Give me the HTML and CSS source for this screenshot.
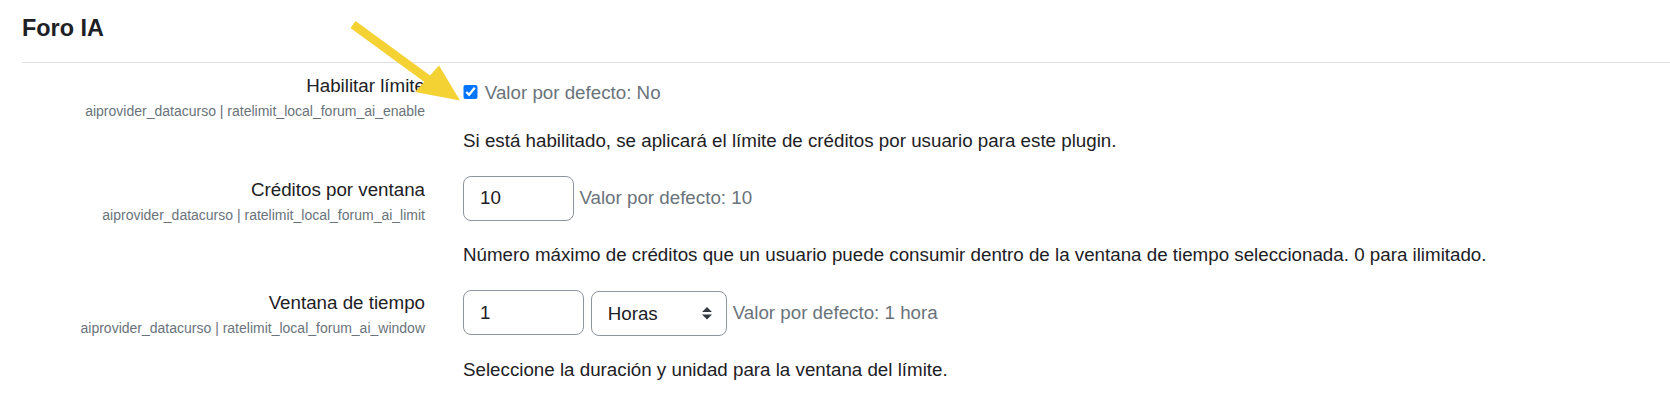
FILE: index.html
```html
<!DOCTYPE html>
<html lang="es">
<head>
<meta charset="utf-8">
<title>Foro IA</title>
<link rel="stylesheet" href="styles.css">
</head>
<body>
<div class="page">
  <h3 class="section-title">Foro IA</h3>
  <hr class="divider">

  <div class="form-item">
    <div class="form-label">
      <label class="label-text" for="enable">Habilitar límite</label>
      <span class="shortname">aiprovider_datacurso | ratelimit_local_forum_ai_enable</span>
    </div>
    <div class="form-setting">
      <div class="control-line checkbox-line">
        <input class="checkbox" type="checkbox" id="enable" checked>
        <span class="defaultinfo checkbox-default">Valor por defecto: No</span>
      </div>
      <p class="description">Si está habilitado, se aplicará el límite de créditos por usuario para este plugin.</p>
    </div>
  </div>

  <div class="form-item">
    <div class="form-label">
      <label class="label-text" for="limit">Créditos por ventana</label>
      <span class="shortname">aiprovider_datacurso | ratelimit_local_forum_ai_limit</span>
    </div>
    <div class="form-setting">
      <div class="control-line">
        <input class="text-input input-limit" type="text" id="limit" value="10">
        <span class="defaultinfo">Valor por defecto: 10</span>
      </div>
      <p class="description">Número máximo de créditos que un usuario puede consumir dentro de la ventana de tiempo seleccionada. 0 para ilimitado.</p>
    </div>
  </div>

  <div class="form-item">
    <div class="form-label">
      <label class="label-text" for="window">Ventana de tiempo</label>
      <span class="shortname">aiprovider_datacurso | ratelimit_local_forum_ai_window</span>
    </div>
    <div class="form-setting">
      <div class="control-line">
        <input class="text-input input-window" type="text" id="window" value="1">
        <span class="select-wrap">
          <select class="select">
            <option>Horas</option>
          </select>
          <svg class="select-arrow" viewBox="0 0 4 5" width="10" height="12.5" aria-hidden="true"><path fill="#343a40" d="M2 0L0 2h4zm0 5L0 3h4z"/></svg>
        </span>
        <span class="defaultinfo">Valor por defecto: 1 hora</span>
      </div>
      <p class="description">Seleccione la duración y unidad para la ventana del límite.</p>
    </div>
  </div>

  <svg class="annotation-arrow" width="480" height="110" viewBox="0 0 480 110" aria-hidden="true">
    <line x1="353" y1="10.5" x2="429" y2="66" stroke="#f4d234" stroke-width="8.5"/>
    <polygon points="460,86.5 415,78 439,51.5" fill="#f4d234"/>
  </svg>
</div>
</body>
</html>
```
FILE: styles.css
```css
* {
  box-sizing: border-box;
}

html, body {
  margin: 0;
  padding: 0;
  background: #ffffff;
}

body {
  font-family: "Liberation Sans", Arial, Helvetica, sans-serif;
  font-size: 18.75px;
  line-height: 28.125px;
  color: #1d2125;
  overflow: hidden;
}

.page {
  position: relative;
  padding-left: 22px;
}

.section-title {
  margin: 13.5px 0 0;
  font-size: 23.4px;
  line-height: 28.1px;
  font-weight: 700;
  color: #1d2125;
}

.divider {
  margin: 20.4px 0 9px;
  border: 0;
  border-top: 1px solid #dee2e6;
  height: 0;
}

.form-item {
  display: flex;
  margin-bottom: 20.4px;
}

.form-label {
  width: 403px;
  flex: none;
  text-align: right;
}

.label-text {
  display: block;
  font-size: 18.75px;
  line-height: 28.125px;
  color: #1d2125;
}

.shortname {
  display: block;
  font-size: 14px;
  line-height: 21px;
  padding-top: 1px;
  color: #6a737b;
}

.form-setting {
  margin-left: 38px;
  flex: 1;
}

.control-line {
  display: flex;
  align-items: center;
  gap: 6px;
  min-height: 45px;
}

.checkbox-line {
  min-height: 34.5px;
  padding-top: 5px;
  gap: 7px;
}

.checkbox {
  width: 14.5px;
  height: 14.5px;
  margin: 0 0 0 0.3px;
  flex: none;
}

.defaultinfo {
  color: #6a737b;
  white-space: nowrap;
}

.checkbox-default {
  padding-top: 2px;
}

.text-input {
  height: 45px;
  padding: 0 16px;
  border: 1px solid #8f959e;
  border-radius: 8px;
  font-family: inherit;
  font-size: 18.75px;
  color: #1d2125;
  background: #ffffff;
  outline: none;
}

.input-limit {
  width: 111px;
  margin-right: -0.6px;
}

.input-window {
  width: 121px;
  margin-right: 0.7px;
}

.select-wrap {
  position: relative;
  display: inline-flex;
  margin-top: 1.4px;
}

.select {
  -webkit-appearance: none;
  appearance: none;
  width: 136px;
  height: 45.5px;
  padding: 0 40px 0 16px;
  border: 1px solid #8f959e;
  border-radius: 8px;
  font-family: inherit;
  font-size: 18.75px;
  color: #1d2125;
  background: #ffffff;
  outline: none;
}

.select-arrow {
  position: absolute;
  right: 15px;
  top: 16.5px;
  pointer-events: none;
}

.description {
  margin: 20px 0 0;
  font-size: 18.75px;
  line-height: 28.125px;
  color: #1d2125;
  white-space: nowrap;
}

.annotation-arrow {
  position: absolute;
  left: 0;
  top: 0;
  pointer-events: none;
}
```
